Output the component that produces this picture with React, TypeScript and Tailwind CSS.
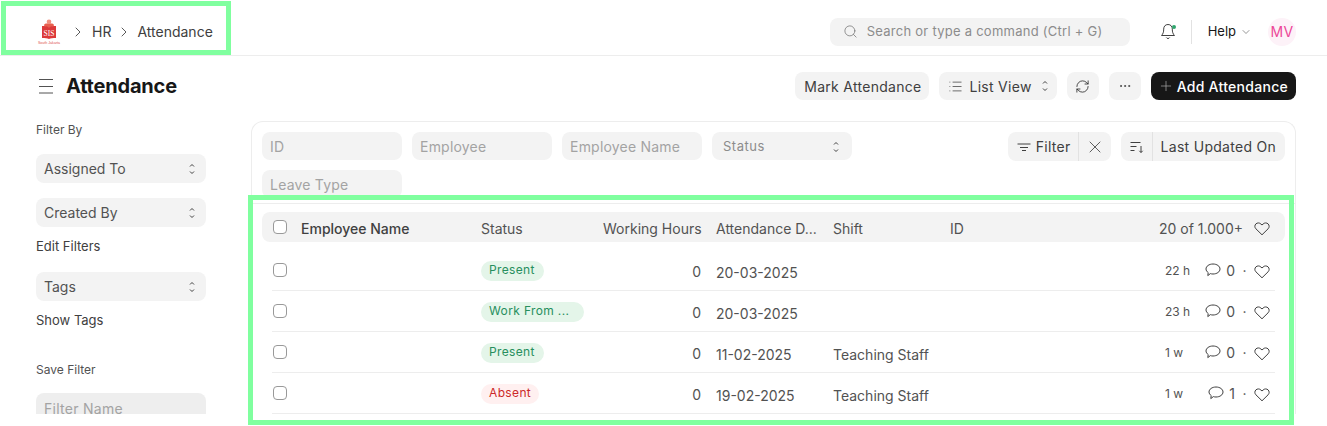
import { ChevronDown, ChevronRight, Ellipsis, List, Plus, RefreshCw, Search, X } from "lucide-react";

const rows = [
  { status: "Present", tone: "green", date: "20-03-2025", shift: "", age: "22 h", comments: 0 },
  { status: "Work From ...", tone: "green", date: "20-03-2025", shift: "", age: "23 h", comments: 0 },
  { status: "Present", tone: "green", date: "11-02-2025", shift: "Teaching Staff", age: "1 w", comments: 0 },
  { status: "Absent", tone: "red", date: "19-02-2025", shift: "Teaching Staff", age: "1 w", comments: 1 },
];

function UpDown() {
  return (
    <svg width="8" height="14" viewBox="0 0 8 14" fill="none" stroke="#404040" strokeWidth="1" className="shrink-0">
      <path d="M2 4.500 4 2.500 6 4.500" />
      <path d="M2 9.500 4 11.500 6 9.500" />
    </svg>
  );
}

function Logo() {
  return (
    <svg width="24" height="26" viewBox="0 0 24 26" className="shrink-0">
      <circle cx="12" cy="2.800" r="2.300" fill="#f0907f" />
      <path d="M7 6.500c0-2 3-2.500 5-1.500 2-1 5-.5 5 1.500l-2 1.500H9z" fill="#e8604f" />
      <path d="M5 7c3 0 5.500.3 7 1.300C13.500 7.300 16 7 19 7v12c-3 0-5.500.3-7 1-1.500-.7-4-1-7-1z" fill="#dc3a3a" />
      <text x="12" y="17" textAnchor="middle" fontSize="7.500" fill="#fff" fontFamily="Liberation Serif, serif">SIS</text>
      <text x="12" y="25" textAnchor="middle" fontSize="3.600" fill="#e0564f" fontFamily="Liberation Sans, sans-serif">South Jakarta</text>
    </svg>
  );
}

function BellIcon() {
  return (
    <svg width="16" height="17" viewBox="0 0 16 17" fill="none" stroke="#404040" strokeWidth="1" className="shrink-0">
      <path d="M8 1.500c-2.800 0-4.300 2-4.300 4.600 0 3-.6 4.700-2.200 6.400h13c-1.600-1.700-2.200-3.400-2.200-6.400C12.300 3.500 10.800 1.500 8 1.500z" />
      <path d="M6.300 14.500c.4.700 1 1 1.700 1s1.300-.3 1.700-1" />
    </svg>
  );
}

function MenuIcon() {
  return (
    <svg width="18" height="18" viewBox="0 0 18 18" fill="none" stroke="#525252" strokeWidth="1" className="shrink-0">
      <path d="M2 2.500h14M2 9.500h14M2 16h14" />
    </svg>
  );
}

function SortIcon() {
  return (
    <svg width="16" height="16" viewBox="0 0 16 16" fill="none" stroke="#404040" strokeWidth="1" className="shrink-0">
      <path d="M1.500 3.500h10M1.500 7.500h6M1.500 11.500h4" />
      <path d="M12 7v6.500M10.300 11.800l1.700 1.700 1.700-1.700" />
    </svg>
  );
}

function FilterIcon() {
  return (
    <svg width="14" height="14" viewBox="0 0 14 14" fill="none" stroke="#404040" strokeWidth="1" className="shrink-0">
      <path d="M0.500 4h13M3 7.500h8M5 10.500h4" />
    </svg>
  );
}

function HeartIcon() {
  return (
    <svg width="16" height="15" viewBox="0 0 16 15" fill="none" stroke="#404040" strokeWidth="1" className="shrink-0">
      <path d="M8 13.800 1.900 7.800C.5 6.400.5 4.200 1.900 2.900c1.400-1.300 3.600-1.300 5 .1l1.100 1 1.100-1c1.400-1.400 3.600-1.400 5-.1 1.400 1.300 1.400 3.500 0 4.900z" />
    </svg>
  );
}

function CommentIcon() {
  return (
    <svg width="16" height="14" viewBox="0 0 16 14" fill="none" stroke="#404040" strokeWidth="1" className="shrink-0">
      <path d="M8 1c3.900 0 7 2.200 7 5s-3.100 5-7 5c-.9 0-1.800-.1-2.600-.4L2.800 12.600l.4-3C1.900 8.600 1 7.400 1 6c0-2.800 3.100-5 7-5z" />
    </svg>
  );
}

function Checkbox() {
  return <span className="block w-[14px] h-[14px] shrink-0 rounded-[4px] border border-[#999999] bg-white" />;
}

function SideSelect({ label }: { label: string }) {
  return (
    <div className="h-[29px] w-[170px] rounded-[8px] bg-[#f3f3f3] flex items-center justify-between pl-2 pr-[10px] text-[14px] text-[#525252]">
      {label}
      <UpDown />
    </div>
  );
}

function FilterField({ label }: { label: string }) {
  return (
    <div className="h-[28px] w-[140px] rounded-[8px] bg-[#f3f3f3] flex items-center px-2 text-[14px] tracking-[0.015em] text-[#a3a3a3]">
      {label}
    </div>
  );
}

export default function App() {
  return (
    <div className="relative h-[426px] w-[1327px] overflow-hidden bg-white font-['Inter',sans-serif] text-[#171717]">
      <header className="h-[56px] border-b border-[#ededed] flex items-center pl-[37px] pr-[31px] pt-[8px]">
        <Logo />
        <div className="flex items-center text-[14px] text-[#404040] ml-[9px]">
          <ChevronRight size={16} strokeWidth={1.3} className="mr-[6px]" />
          <span>HR</span>
          <ChevronRight size={16} strokeWidth={1.3} className="mx-[5px]" />
          <span>Attendance</span>
        </div>
        <div className="ml-auto flex items-center">
          <div className="h-[28px] w-[300px] rounded-[8px] bg-[#f3f3f3] flex items-center pl-[13px] text-[13px] tracking-[0.02em] text-[#8c8c8c]">
            <Search size={15} strokeWidth={1.2} className="text-[#737373] mr-[9px]" />
            Search or type a command (Ctrl + G)
          </div>
          <div className="relative ml-[30px]">
            <BellIcon />
            <span className="absolute top-[2px] right-0 h-[4px] w-[4px] rounded-full bg-[#30a66d]" />
          </div>
          <div className="h-[24px] w-px bg-[#e2e2e2] ml-[15px]" />
          <span className="ml-[16px] text-[13px] text-[#171717]">Help</span>
          <ChevronDown size={12} strokeWidth={1.1} className="ml-[4px] text-[#404040]" />
          <div className="ml-[16px] h-[28px] w-[28px] rounded-full bg-[#fdf2f8] flex items-center justify-center text-[14px] tracking-[0.02em] text-[#ec4899]">
            MV
          </div>
        </div>
      </header>

      <div className="h-[358px] overflow-hidden">
        <div className="h-[65px] flex items-center pl-[37px] pr-[31px] pb-[5px]">
          <MenuIcon />
          <h1 className="ml-[11px] text-[20px] font-bold leading-none tracking-[-0.01em] text-[#171717]">Attendance</h1>
          <div className="ml-auto flex items-center gap-[10px] text-[14px] tracking-[0.02em] text-[#404040]">
            <div className="h-[28px] rounded-[8px] bg-[#f3f3f3] pl-[9px] pr-2 flex items-center">Mark Attendance</div>
            <div className="h-[28px] rounded-[8px] bg-[#f3f3f3] pl-[9px] pr-[8px] flex items-center">
              <List size={15} strokeWidth={1.2} className="mr-[6px]" />
              List View
              <span className="ml-[9px]">
                <UpDown />
              </span>
            </div>
            <div className="h-[28px] w-[32px] rounded-[8px] bg-[#f3f3f3] flex items-center justify-center">
              <RefreshCw size={15} strokeWidth={1.3} className="text-[#262626]" />
            </div>
            <div className="h-[28px] w-[32px] rounded-[8px] bg-[#f3f3f3] flex items-center justify-center">
              <Ellipsis size={14} strokeWidth={1.5} />
            </div>
            <div className="h-[28px] rounded-[8px] bg-[#171717] text-white pl-[7px] pr-2 flex items-center">
              <Plus size={16} strokeWidth={1} className="mr-[3px] text-[#b3b3b3]" />
              <span className="font-medium">Add Attendance</span>
            </div>
          </div>
        </div>

        <div className="flex pl-[36px] pr-[31px]">
          <aside className="w-[170px] shrink-0 text-[13px]">
            <p className="text-[12px] text-[#525252] mt-[1px] mb-[16px] leading-[16px]">Filter By</p>
            <SideSelect label="Assigned To" />
            <div className="mt-[15px]">
              <SideSelect label="Created By" />
            </div>
            <p className="mt-[11px] leading-[16px] text-[#404040]">Edit Filters</p>
            <div className="mt-[18px]">
              <SideSelect label="Tags" />
            </div>
            <p className="mt-[11px] leading-[16px] text-[#404040]">Show Tags</p>
            <p className="mt-[34px] text-[12px] leading-[16px] text-[#525252]">Save Filter</p>
            <div className="mt-[15px] h-[29px] rounded-t-[8px] bg-[#eeeeee] pl-2 pt-[5px] text-[14px] tracking-[0.02em] text-[#a3a3a3]">
              Filter Name
            </div>
          </aside>

          <main className="ml-[45px] w-[1045px] h-[293px] rounded-t-[12px] border border-b-0 border-[#ededed] overflow-hidden">
            <div className="h-[82px] border-b border-[#ededed] pl-[10px] pr-[10px] pt-[10px] flex justify-between">
              <div className="flex flex-wrap w-[620px] gap-x-[10px] gap-y-[10px] content-start">
                <FilterField label="ID" />
                <FilterField label="Employee" />
                <FilterField label="Employee Name" />
                <div className="h-[28px] w-[140px] rounded-[8px] bg-[#f3f3f3] flex items-center justify-between pl-[11px] pr-[12px] pt-px text-[13px] tracking-[0.04em] text-[#8c8c8c]">
                  Status
                  <UpDown />
                </div>
                <FilterField label="Leave Type" />
              </div>
              <div className="flex items-start gap-[10px] text-[14px] tracking-[0.02em] text-[#404040]">
                <div className="h-[29px] rounded-[8px] bg-[#f3f3f3] flex items-center">
                  <div className="h-full flex items-center pl-[9px] pr-[7px] border-r border-[#e2e2e2]">
                    <FilterIcon />
                    <span className="ml-[5px]">Filter</span>
                  </div>
                  <div className="w-[32px] flex justify-center">
                    <X size={20} strokeWidth={1} />
                  </div>
                </div>
                <div className="h-[29px] rounded-[8px] bg-[#f3f3f3] flex items-center">
                  <div className="h-full flex items-center pl-[8px] pr-[7px] border-r border-[#e2e2e2]">
                    <SortIcon />
                  </div>
                  <span className="pl-[8px] pr-[9px]">Last Updated On</span>
                </div>
              </div>
            </div>

            <div className="mx-[10px] mt-[8px] h-[30px] rounded-[8px] bg-[#f3f3f3] flex items-center text-[14px] text-[#525252] whitespace-nowrap">
              <div className="ml-[11px]">
                <Checkbox />
              </div>
              <span className="ml-[14px] w-[180px] mt-[2px] font-medium text-[#404040]">Employee Name</span>
              <span className="w-[122px] mt-[2px]">Status</span>
              <span className="w-[98px] mt-[2px] text-right">Working Hours</span>
              <span className="ml-[15px] w-[117px] mt-[2px]">Attendance D...</span>
              <span className="w-[117px] mt-[2px]">Shift</span>
              <span className="mt-[2px]">ID</span>
              <span className="ml-auto mt-[2px]">20 of 1.000+</span>
              <span className="ml-[11px] mr-[15px] mt-[2px]">
                <HeartIcon />
              </span>
            </div>

            <div className="mx-[10px] mt-[8px]">
              {rows.map((row, i) => (
                <div key={i} className="mx-[10px] h-[41px] border-b border-[#ededed] flex items-center text-[14px] text-[#525252]">
                  <div className="ml-px">
                    <Checkbox />
                  </div>
                  <span className="ml-[14px] w-[180px]" />
                  <span className="w-[122px] h-[20px] mt-[2px] flex">
                    <span
                      className={
                        row.tone === "green"
                          ? `inline-block h-[20px] rounded-full bg-[#e4f5e9] text-[#278f5e] pl-[8px] ${row.status === "Present" ? "pr-[9px]" : "pr-[15px]"} text-[12px] tracking-[0.03em] leading-[18px]`
                          : "inline-block h-[20px] rounded-full bg-[#fff0f0] text-[#cc2929] px-[8px] text-[12px] tracking-[0.03em] leading-[18px]"
                      }
                    >
                      {row.status}
                    </span>
                  </span>
                  <span className="w-[98px] mt-[2px] text-right">0</span>
                  <span className="ml-[15px] w-[117px] mt-[4px]">{row.date}</span>
                  <span className="w-[117px] mt-[4px]">{row.shift}</span>
                  <div className="ml-auto w-[110px] flex items-center">
                    <span className="w-[40px] mt-[2px] text-[12px] text-[#525252]">{row.age}</span>
                    <div className="w-[30px] flex items-center justify-end">
                      <CommentIcon />
                      <span className="ml-[5px]">{row.comments}</span>
                    </div>
                    <span className="w-[19px] text-center">·</span>
                    <span className="mr-[5px] mt-[3px]">
                      <HeartIcon />
                    </span>
                  </div>
                </div>
              ))}
            </div>
          </main>
        </div>
      </div>

      <div className="absolute left-px top-px h-[54px] w-[230px] border-[5px] border-[#80ff9f]" />
      <div className="absolute left-[248px] top-[195px] h-[230px] w-[1046px] border-[5px] border-[#80ff9f]" />
    </div>
  );
}
